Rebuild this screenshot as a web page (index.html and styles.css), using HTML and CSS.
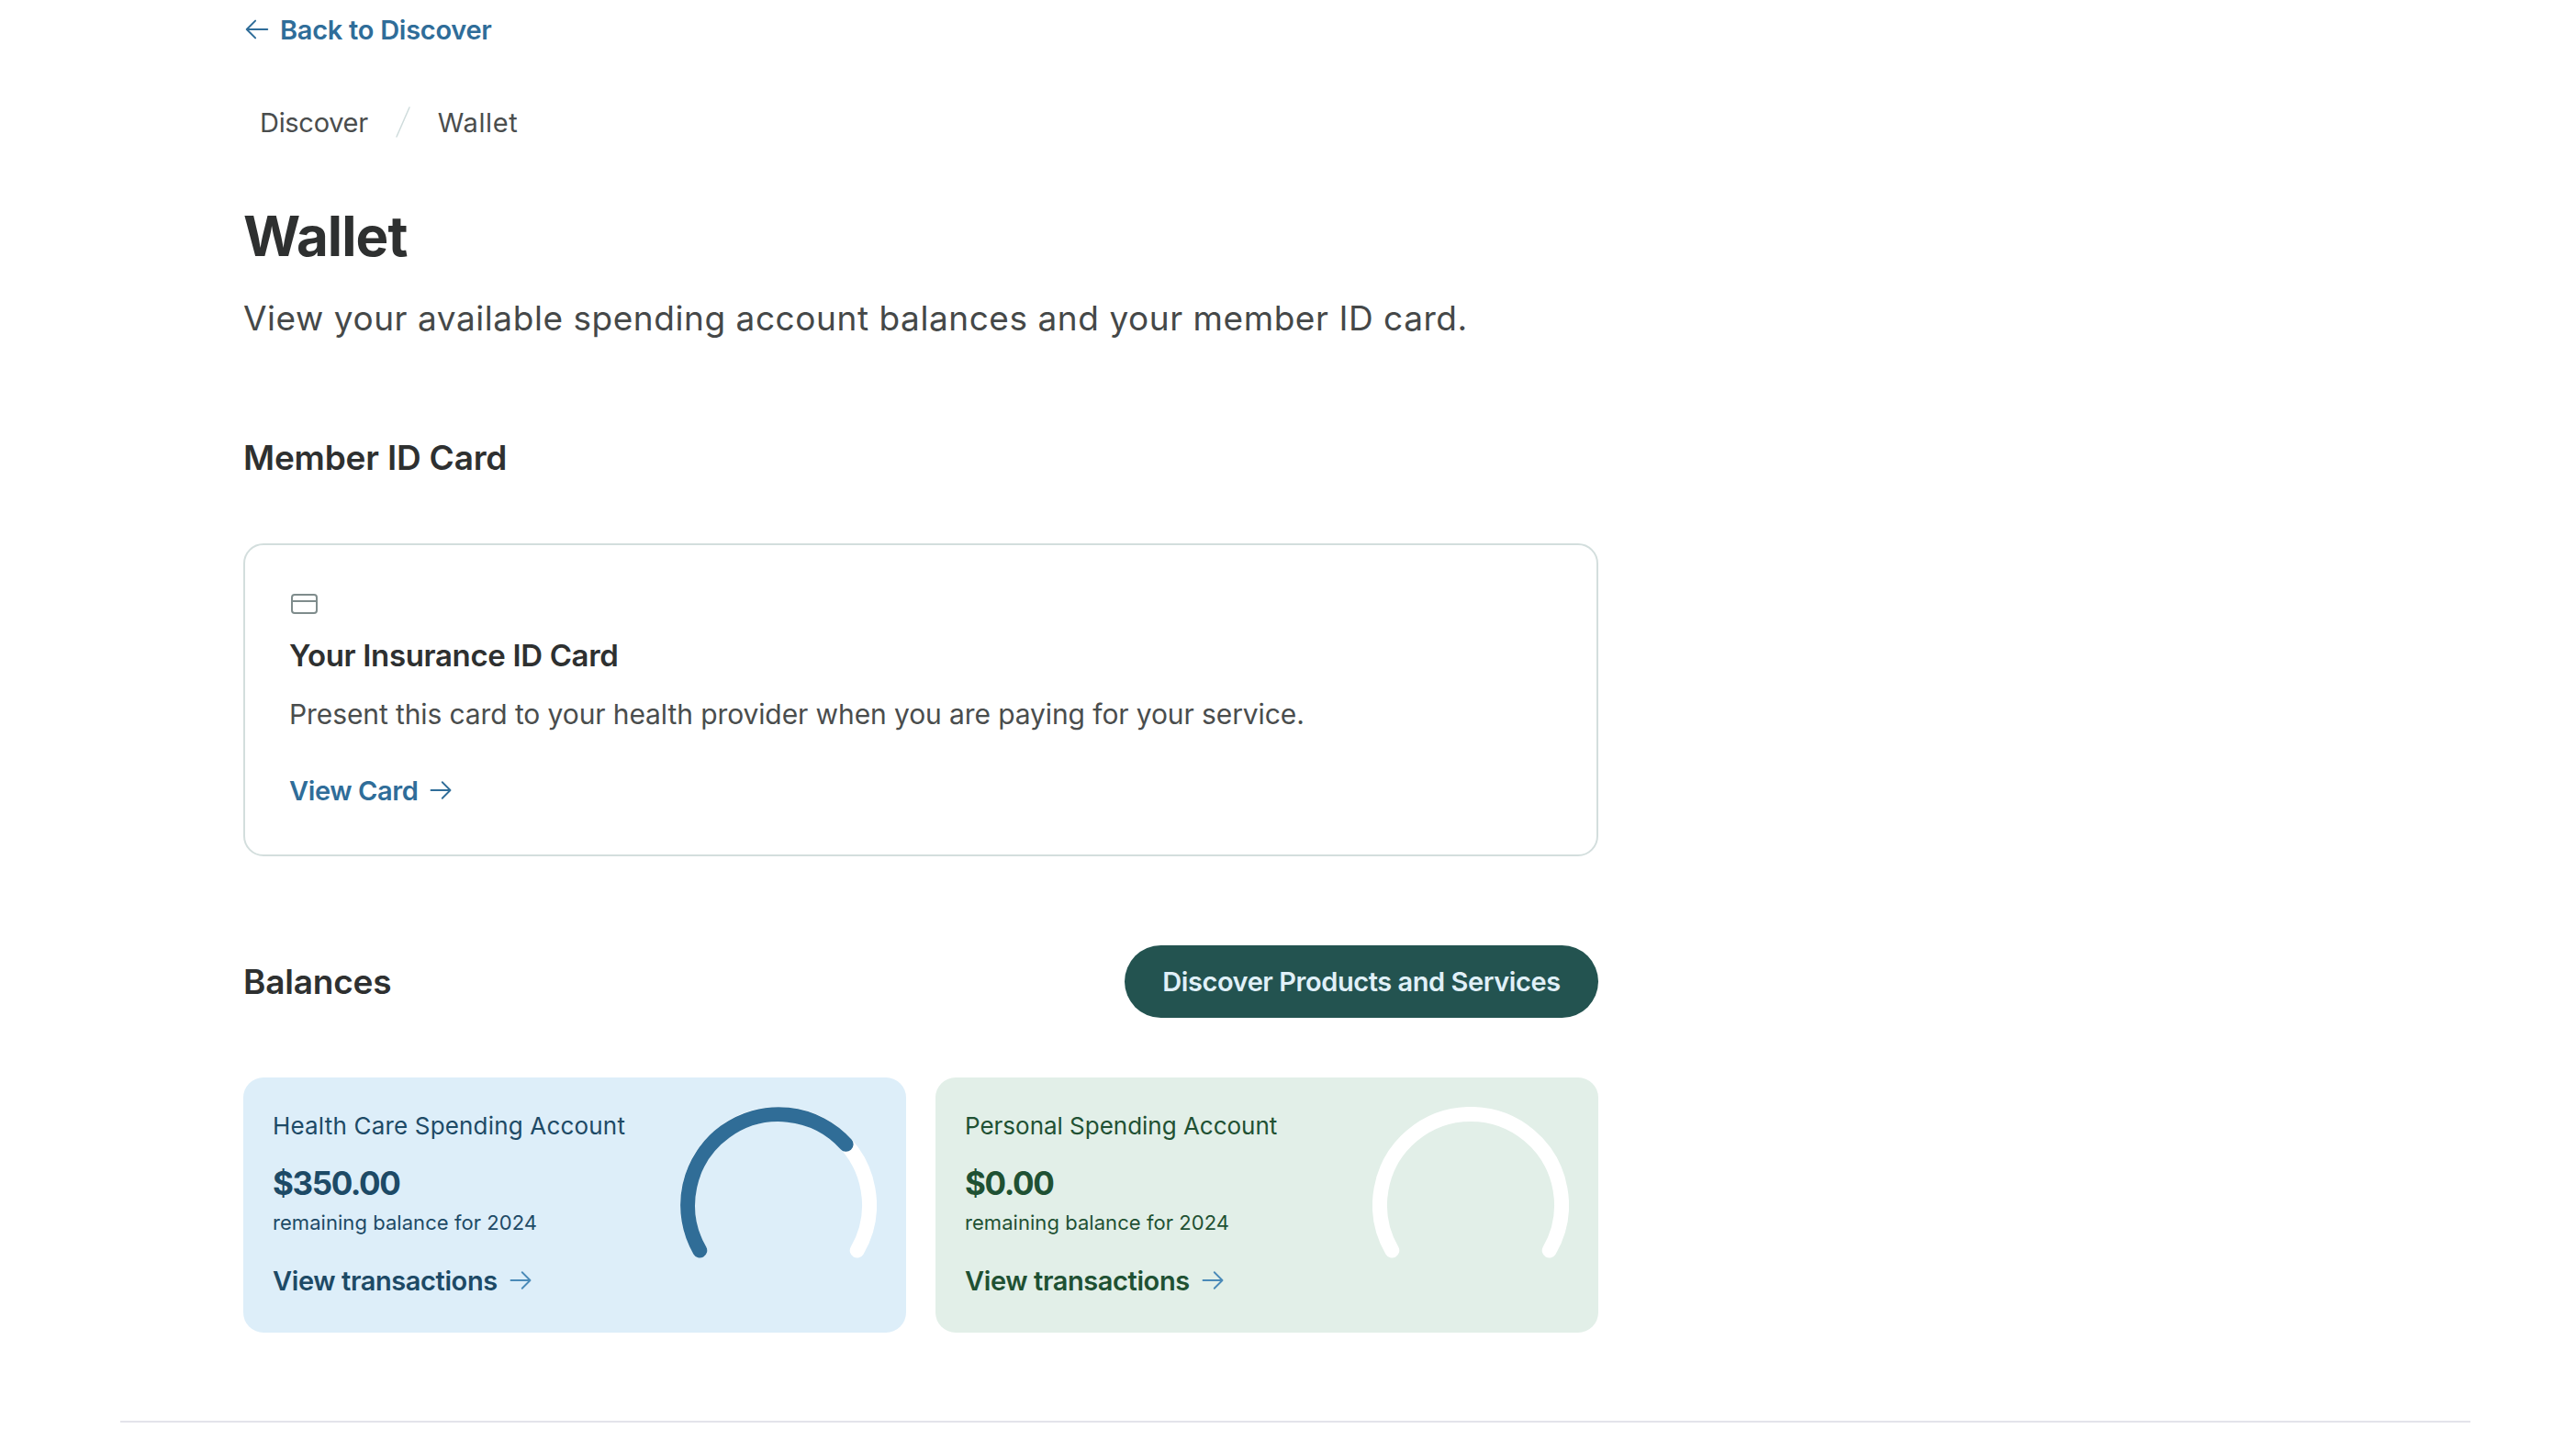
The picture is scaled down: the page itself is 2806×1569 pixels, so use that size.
FILE: index.html
```html
<!DOCTYPE html>
<html lang="en">
<head>
    <meta charset="UTF-8">
    <title>Wallet</title>
    <link rel="stylesheet" href="styles.css">
</head>
<body>
    <div class="container">
        <a class="back-link" href="#">
            <svg class="arrow-back" viewBox="0 0 24 24"><path d="M10.5 19.5 3 12m0 0 7.5-7.5M3 12h18"/></svg>
            Back to Discover
        </a>

        <div class="breadcrumb">
            <span>Discover</span>
            <svg class="crumb-slash" viewBox="0 0 16 34"><path d="M15 1 1 33"/></svg>
            <span class="crumb-current">Wallet</span>
        </div>

        <h1>Wallet</h1>
        <p class="subtitle">View your available spending account balances and your member ID card.</p>

        <h2 class="member-title">Member ID Card</h2>

        <div class="id-card">
            <svg class="card-icon" viewBox="0 0 29 22"><rect x="1" y="1" width="27" height="20" rx="3"/><path d="M1 8h27"/></svg>
            <h3>Your Insurance ID Card</h3>
            <p>Present this card to your health provider when you are paying for your service.</p>
            <a class="view-card" href="#">
                View Card
                <svg class="arrow" viewBox="0 0 24 24"><path d="M13.5 4.5 21 12m0 0-7.5 7.5M21 12H3"/></svg>
            </a>
        </div>

        <div class="balances-head">
            <h2>Balances</h2>
            <button class="discover-btn">Discover Products and Services</button>
        </div>

        <div class="balance-grid">
            <div class="balance-card hsa">
                <div class="balance-text">
                    <div class="account-name">Health Care Spending Account</div>
                    <div class="amount">$350.00</div>
                    <div class="remaining">remaining balance for 2024</div>
                    <a class="transactions" href="#">
                        View transactions
                        <svg class="arrow" viewBox="0 0 24 24"><path d="M13.5 4.5 21 12m0 0-7.5 7.5M21 12H3"/></svg>
                    </a>
                </div>
                <svg class="gauge" viewBox="0 0 214 170">
                    <path class="gauge-track" d="M21.3 156.5A99 99 0 1 1 192.7 156.5"/>
                    <path class="gauge-fill" d="M21.3 156.5A99 99 0 0 1 180.6 40.8"/>
                </svg>
            </div>
            <div class="balance-card psa">
                <div class="balance-text">
                    <div class="account-name">Personal Spending Account</div>
                    <div class="amount">$0.00</div>
                    <div class="remaining">remaining balance for 2024</div>
                    <a class="transactions" href="#">
                        View transactions
                        <svg class="arrow" viewBox="0 0 24 24"><path d="M13.5 4.5 21 12m0 0-7.5 7.5M21 12H3"/></svg>
                    </a>
                </div>
                <svg class="gauge" viewBox="0 0 214 170">
                    <path class="gauge-track" d="M21.3 156.5A99 99 0 1 1 192.7 156.5"/>
                </svg>
            </div>
        </div>
    </div>

    <hr class="footer-line">
</body>
</html>
```
FILE: styles.css
```css
* {
    margin: 0;
    padding: 0;
    box-sizing: border-box;
}

body {
    font-family: Inter, "Noto Sans", sans-serif;
    background-color: #fff;
    color: #2e3030;
}

a {
    text-decoration: none;
}

svg path, svg rect {
    fill: none;
    stroke-linecap: round;
    stroke-linejoin: round;
}

.container {
    width: 1476px;
    margin-left: 265px;
    padding-top: 14px;
}

.back-link {
    display: flex;
    align-items: center;
    gap: 10px;
    height: 36px;
    color: #2f6d99;
    font-size: 29px;
    font-weight: 600;
    letter-spacing: -0.28px;
}

.arrow-back {
    width: 30px;
    height: 30px;
    stroke: #2f6d99;
    stroke-width: 1.6;
}

.arrow-back path, .arrow path {
    stroke: inherit;
}

.breadcrumb {
    display: flex;
    align-items: center;
    gap: 30px;
    height: 36px;
    margin-top: 65px;
    margin-bottom: 71px;
    padding-left: 18px;
    color: #4a4d4d;
    font-size: 29px;
    letter-spacing: -0.3px;
}

.crumb-current {
    letter-spacing: 0.6px;
}

.crumb-slash {
    width: 16px;
    height: 34px;
}

.crumb-slash path {
    stroke: #cfdcdc;
    stroke-width: 1.5;
}

h1 {
    font-size: 60px;
    line-height: 70px;
    font-weight: 700;
    letter-spacing: -0.9px;
}

.subtitle {
    margin-top: 31px;
    font-size: 37px;
    line-height: 48px;
    letter-spacing: 0.55px;
    color: #454848;
}

h2 {
    font-size: 37px;
    line-height: 48px;
    font-weight: 600;
    letter-spacing: -0.2px;
}

.member-title {
    margin-top: 104px;
}

.id-card {
    height: 341px;
    margin-top: 69px;
    padding: 53px 48px 0;
    border: 2px solid #d3dedd;
    border-radius: 22px;
}

.card-icon {
    display: block;
    width: 29px;
    height: 22px;
    margin-left: 2px;
}

.card-icon rect, .card-icon path {
    stroke: #7f8c8c;
    stroke-width: 2;
}

.id-card h3 {
    margin-top: 23px;
    font-size: 33px;
    line-height: 44px;
    font-weight: 600;
    letter-spacing: -0.35px;
}

.id-card p {
    margin-top: 22px;
    font-size: 30px;
    line-height: 40px;
    letter-spacing: -0.1px;
    color: #4a4d4d;
}

.view-card {
    display: flex;
    align-items: center;
    gap: 11px;
    margin-top: 43px;
    height: 40px;
    color: #2f6d99;
    font-size: 29px;
    font-weight: 600;
    letter-spacing: -0.4px;
}

.arrow {
    width: 28px;
    height: 28px;
    stroke: #2f6d99;
    stroke-width: 1.6;
}

.balances-head {
    display: flex;
    align-items: center;
    justify-content: space-between;
    margin-top: 97px;
    height: 79px;
}

.discover-btn {
    width: 516px;
    height: 79px;
    border: none;
    border-radius: 40px;
    background-color: #235350;
    color: #e0f0f8;
    font-family: inherit;
    font-size: 29px;
    font-weight: 600;
    letter-spacing: -0.44px;
}

.balance-grid {
    display: grid;
    grid-template-columns: 722px 722px;
    justify-content: space-between;
    margin-top: 65px;
}

.balance-card {
    display: flex;
    justify-content: space-between;
    height: 278px;
    padding: 32px;
    border-radius: 22px;
}

.hsa {
    background-color: #ddeef9;
    color: #1d4a66;
}

.hsa .gauge-fill {
    stroke: #306d97;
}

.psa {
    background-color: #e2efe8;
    color: #1f5133;
}

.account-name {
    font-size: 26px;
    line-height: 36px;
    margin-top: 3px;
    letter-spacing: 0.18px;
}

.psa .account-name {
    letter-spacing: -0.02px;
}

.amount {
    margin-top: 21px;
    font-size: 35px;
    line-height: 46px;
    font-weight: 700;
    letter-spacing: -1.4px;
}

.remaining {
    margin-top: 5px;
    font-size: 22px;
    line-height: 30px;
    letter-spacing: 0.05px;
}

.transactions {
    display: flex;
    align-items: center;
    gap: 11px;
    margin-top: 28px;
    height: 40px;
    color: inherit;
    font-size: 29px;
    font-weight: 600;
    letter-spacing: -0.4px;
}

.transactions .arrow {
    stroke: #4a8ab8;
}

.gauge {
    width: 214px;
    height: 170px;
}

.gauge path {
    stroke-width: 16;
}

.gauge .gauge-track {
    stroke: #fff;
}

.footer-line {
    height: 2px;
    margin: 96px 115px 0 131px;
    border: none;
    background-color: #e3e3ea;
}
```
